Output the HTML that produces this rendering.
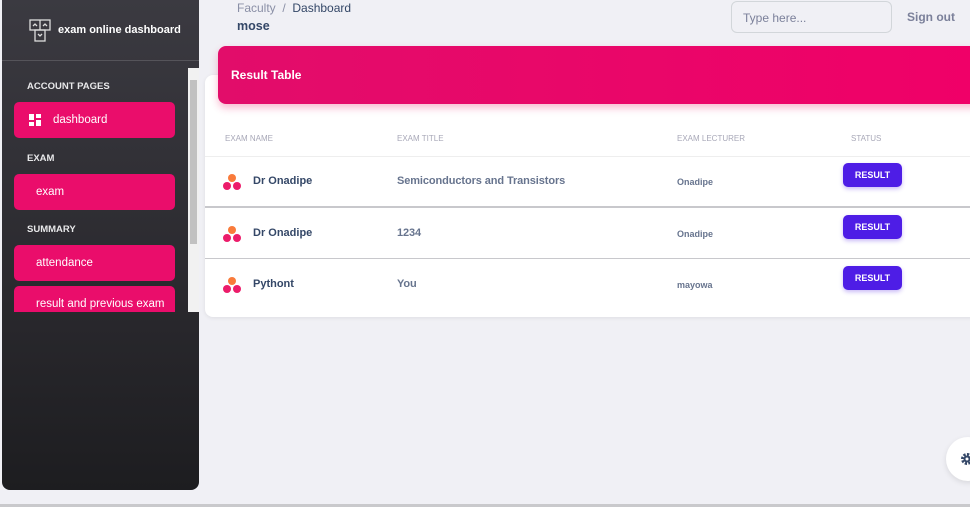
<!DOCTYPE html>
<html><head><style>
*{margin:0;padding:0;box-sizing:border-box}
body{width:970px;height:507px;background:#f0f0f5;font-family:"Liberation Sans",sans-serif;position:relative;overflow:hidden}
.sb{position:absolute;left:2px;top:0;width:197px;height:490px;border-radius:0 0 8px 8px;background:linear-gradient(#3b3a41,#2a292e 60%,#1d1d20);}
.brand{position:absolute;left:0;top:0;width:197px;height:61px;border-bottom:1px solid #55545a;color:#fff;font-weight:bold;font-size:11px}
.brand span{position:absolute;left:56px;top:24px}
.scroll{position:absolute;left:0;top:68px;width:197px;height:244px;overflow:hidden}
.sec{position:absolute;left:25px;color:#e8e8ea;font-size:9.5px;font-weight:bold}
.it{position:absolute;left:12px;width:161px;height:36px;border-radius:5px;background:#ea0d6b;color:#fff;font-size:11.5px;padding:12px 0 0 22px}
.bar{position:absolute;left:186px;top:0;width:11px;height:244px;background:#f1f1f1}
.bar div{position:absolute;left:2px;top:12px;width:7px;height:164px;background:#c1c1c1}
.card{position:absolute;left:205px;top:75px;width:780px;height:242px;background:#fff;border-radius:8px;box-shadow:0 1px 4px rgba(0,0,0,.08)}
.pink{position:absolute;left:218px;top:46px;width:770px;height:58px;border-radius:8px;background:linear-gradient(90deg,#e20d6a,#f00068);box-shadow:0 4px 8px rgba(233,30,99,.3);color:#fff;font-weight:bold;font-size:12px;padding:22px 0 0 13px}
.th{position:absolute;top:134px;font-size:8px;color:#a8a8b8}
.row{position:absolute;left:205px;width:765px;height:51px;border-bottom:1px solid #c8c8cc}
.nm{position:absolute;left:48px;top:19px;font-weight:bold;font-size:11px;color:#344767}
.ti{position:absolute;left:192px;top:19px;font-weight:bold;font-size:11px;color:#67748e;letter-spacing:-.1px}
.le{position:absolute;left:472px;top:21px;font-weight:bold;font-size:9px;color:#67748e}
.btn{position:absolute;left:638px;top:7px;width:59px;height:24px;border-radius:5px;background:#4e1de6;color:#fff;font-size:9px;font-weight:bold;text-align:center;line-height:24px;box-shadow:0 2px 4px rgba(80,30,230,.3)}
.ic{position:absolute;left:17px;top:17px}
</style></head><body>
<div class="sb">
 <div class="brand">
  <svg style="position:absolute;left:27px;top:19px" width="22" height="24" viewBox="0 0 22 24" fill="none" stroke="#ddd" stroke-width="1.3"><rect x="1" y="1" width="20" height="10"/><line x1="11" y1="1" x2="11" y2="11"/><rect x="6" y="11" width="10" height="11"/><path d="M4 7l2-2 2 2M14 7l2-2 2 2M9 15l2 2 2-2"/></svg>
  <span>exam online dashboard</span>
 </div>
 <div class="scroll">
  <div class="sec" style="top:13px">ACCOUNT PAGES</div>
  <div class="it" style="top:34px;padding-left:39px">dashboard
   <svg style="position:absolute;left:15px;top:12px" width="12" height="12" viewBox="0 0 12 12" fill="#fff"><rect x="0" y="0" width="5" height="6"/><rect x="7" y="0" width="5" height="4"/><rect x="0" y="8" width="5" height="4"/><rect x="7" y="6" width="5" height="6"/></svg></div>
  <div class="sec" style="top:85px">EXAM</div>
  <div class="it" style="top:106px">exam</div>
  <div class="sec" style="top:156px">SUMMARY</div>
  <div class="it" style="top:177px">attendance</div>
  <div class="it" style="top:218px">result and previous exam</div>
  <div class="bar"><div></div></div>
 </div>
</div>
<div style="position:absolute;left:237px;top:1px;font-size:12px;color:#8a8fa6">Faculty &nbsp;/&nbsp; <span style="color:#344767">Dashboard</span></div>
<div style="position:absolute;left:237px;top:19px;font-size:12.5px;font-weight:bold;color:#344767">mose</div>
<div style="position:absolute;left:731px;top:1px;width:161px;height:32px;border:1px solid #d2d6da;border-radius:6px;font-size:12px;color:#7b809a;padding:9px 0 0 11px">Type here...</div>
<div style="position:absolute;left:907px;top:10px;font-size:12px;font-weight:bold;color:#7b809a">Sign out</div>
<div class="card"></div>
<div class="pink">Result Table</div>
<div class="th" style="left:225px">EXAM NAME</div>
<div class="th" style="left:397px">EXAM TITLE</div>
<div class="th" style="left:677px">EXAM LECTURER</div>
<div class="th" style="left:851px">STATUS</div>
<div class="row" style="top:156px;height:52px;border-top:1px solid #eee"></div>
<div class="row" style="top:156px"><svg class="ic" width="20" height="18"><circle cx="10" cy="5" r="4" fill="#f97b3b"/><circle cx="5" cy="13" r="4" fill="#ec1c6a"/><circle cx="15" cy="13" r="4" fill="#ec1c6a"/></svg><div class="nm">Dr Onadipe</div><div class="ti">Semiconductors and Transistors</div><div class="le">Onadipe</div><div class="btn">RESULT</div></div>
<div class="row" style="top:208px"><svg class="ic" width="20" height="18"><circle cx="10" cy="5" r="4" fill="#f97b3b"/><circle cx="5" cy="13" r="4" fill="#ec1c6a"/><circle cx="15" cy="13" r="4" fill="#ec1c6a"/></svg><div class="nm">Dr Onadipe</div><div class="ti">1234</div><div class="le">Onadipe</div><div class="btn">RESULT</div></div>
<div class="row" style="top:259px;border-bottom:none"><svg class="ic" width="20" height="18"><circle cx="10" cy="5" r="4" fill="#f97b3b"/><circle cx="5" cy="13" r="4" fill="#ec1c6a"/><circle cx="15" cy="13" r="4" fill="#ec1c6a"/></svg><div class="nm">Pythont</div><div class="ti">You</div><div class="le">mayowa</div><div class="btn">RESULT</div></div>
<div style="position:absolute;left:946px;top:437px;width:44px;height:44px;border-radius:50%;background:#fff;box-shadow:0 2px 6px rgba(0,0,0,.1)"><svg style="position:absolute;left:14px;top:15px" width="14" height="14" viewBox="0 0 14 14"><circle cx="7" cy="7" r="4.5" fill="none" stroke="#344767" stroke-width="3" stroke-dasharray="2.2 1.3"/><circle cx="7" cy="7" r="3.5" fill="#344767"/><circle cx="7" cy="7" r="1.5" fill="#fff"/></svg></div>
<div style="position:absolute;left:0;top:504px;width:970px;height:3px;background:#c9c9cc"></div>
</body></html>
